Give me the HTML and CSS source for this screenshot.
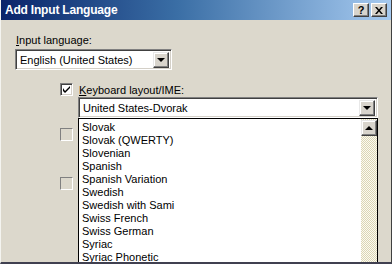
FILE: index.html
```html
<!DOCTYPE html>
<html lang="en">
<head>
  <meta charset="UTF-8">
  <title>Add Input Language</title>
  <link rel="stylesheet" href="styles.css">
</head>
<body>

  <div class="dialog">
    <div class="titlebar">
      <span class="title">Add Input Language</span>
      <div class="title-buttons">
        <span class="tb-btn">?</span>
        <span class="tb-btn">
          <svg width="8" height="7" viewBox="0 0 8 7"><path d="M0 0h2l2 2.5L6 0h2L5 3.5 8 7H6L4 4.5 2 7H0l3-3.5z" fill="#000"/></svg>
        </span>
      </div>
    </div>

    <div class="content">
      <div class="field-label"><u>I</u>nput language:</div>
      <div class="combo lang-combo">
        <span class="combo-text">English (United States)</span>
        <span class="combo-btn"><span class="arrow-down"></span></span>
      </div>

      <div class="options">
        <div class="check-row">
          <span class="checkbox checked">
            <svg width="7" height="7" viewBox="0 0 7 7"><path d="M0 2v3l2 2 5-5V0L2 5z" fill="#000"/></svg>
          </span>
          <span class="check-label"><u>K</u>eyboard layout/IME:</span>
        </div>

        <div class="layout-block">
          <div class="combo layout-combo">
            <span class="combo-text">United States-Dvorak</span>
            <span class="combo-btn"><span class="arrow-down"></span></span>
          </div>

          <!-- opened dropdown of the layout combo -->
          <div class="dropdown">
            <ul class="items" id="layoutList"></ul>
            <div class="scrollbar">
              <span class="scroll-btn"><span class="arrow-up"></span></span>
            </div>
          </div>
        </div>

        <span class="checkbox disabled second"></span>
        <span class="checkbox disabled third"></span>
      </div>
    </div>
  </div>

  <script>
    const layouts = [
      "Slovak",
      "Slovak (QWERTY)",
      "Slovenian",
      "Spanish",
      "Spanish Variation",
      "Swedish",
      "Swedish with Sami",
      "Swiss French",
      "Swiss German",
      "Syriac",
      "Syriac Phonetic"
    ];

    const list = document.getElementById('layoutList');
    layouts.forEach(name => {
      const li = document.createElement('li');
      li.textContent = name;
      list.appendChild(li);
    });
  </script>

</body>
</html>
```

FILE: styles.css
```css
body {
  margin: 0;
  width: 392px;
  height: 264px;
  overflow: hidden;
  font-family: "Liberation Sans", Arial, sans-serif;
  font-size: 11px;
  color: #000;
}

.dialog {
  width: 392px;
  height: 264px;
  box-sizing: border-box;
  background-color: #dcd8cc;
  border-left: 1px solid #f4f4f0;
  border-right: 1px solid #404040;
  border-bottom: 2px solid #404050;
  overflow: hidden;
}

.titlebar {
  height: 20px;
  display: flex;
  align-items: center;
  justify-content: space-between;
  padding: 0 4px 0 4px;
  background: linear-gradient(to right, #0a246a, #3a6ea5 45%, #a6caf0);
}

.title {
  color: #fff;
  font-weight: bold;
  font-size: 12px;
  letter-spacing: -0.2px;
}

.title-buttons {
  display: flex;
  gap: 2px;
}

.tb-btn {
  width: 16px;
  height: 14px;
  box-sizing: border-box;
  display: flex;
  align-items: center;
  justify-content: center;
  background-color: #d8d4cc;
  border: 1px solid;
  border-color: #fff #404040 #404040 #fff;
  box-shadow: inset -1px -1px #808080;
  font-weight: bold;
  font-size: 11px;
  line-height: 12px;
}

.content {
  padding: 14px 0 0 14px;
  position: relative;
}

.field-label {
  line-height: 13px;
  padding-left: 1px;
}

.combo {
  margin-top: 2px;
  height: 21px;
  box-sizing: border-box;
  display: flex;
  align-items: center;
  justify-content: space-between;
  background-color: #fff;
  border: 1px solid;
  border-color: #808080 #fff #fff #808080;
  box-shadow: inset 1px 1px #404040, inset -1px -1px #d4d0c8;
  padding: 0 2px 0 4px;
}

.lang-combo {
  width: 157px;
}

.layout-combo {
  width: 300px;
}

.combo-btn,
.scroll-btn {
  width: 16px;
  height: 16px;
  box-sizing: border-box;
  display: flex;
  align-items: center;
  justify-content: center;
  background-color: #d8d4cc;
  border: 1px solid;
  border-color: #e8e8e8 #404040 #404040 #e8e8e8;
  box-shadow: inset -1px -1px #808080, inset 1px 1px #fff;
}

.arrow-down {
  width: 0;
  height: 0;
  border-left: 4px solid transparent;
  border-right: 4px solid transparent;
  border-top: 4px solid #000;
}

.arrow-up {
  width: 0;
  height: 0;
  border-left: 4px solid transparent;
  border-right: 4px solid transparent;
  border-bottom: 4px solid #000;
}

.options {
  margin-top: 13px;
  padding-left: 45px;
}

.check-row {
  display: flex;
  align-items: center;
  gap: 6px;
  height: 13px;
}

.checkbox {
  width: 13px;
  height: 13px;
  box-sizing: border-box;
  display: flex;
  align-items: center;
  justify-content: center;
  border: 1px solid;
  border-color: #808080 #fff #fff #808080;
}

.checkbox.checked {
  background-color: #fff;
  box-shadow: inset 1px 1px #404040, inset -1px -1px #d4d0c8;
}

.checkbox.second {
  margin-top: 10px;
}

.checkbox.third {
  margin-top: 36px;
}

.layout-block {
  margin-left: 18px;
  position: relative;
}

.layout-block .combo {
  margin-top: 1px;
}

.dropdown {
  position: absolute;
  top: 100%;
  left: 0;
  width: 300px;
  height: 160px;
  box-sizing: border-box;
  background-color: #fff;
  border: 1px solid #000;
  display: flex;
  z-index: 2;
}

.items {
  list-style: none;
  margin: 0;
  padding: 2px 0 0 3px;
  flex: 1;
  line-height: 13px;
}

.scrollbar {
  width: 16px;
  padding-top: 1px;
  background: repeating-conic-gradient(#fbfaf2 0 25%, #dcd6b4 0 50%) 0 0 / 2px 2px;
}
```
